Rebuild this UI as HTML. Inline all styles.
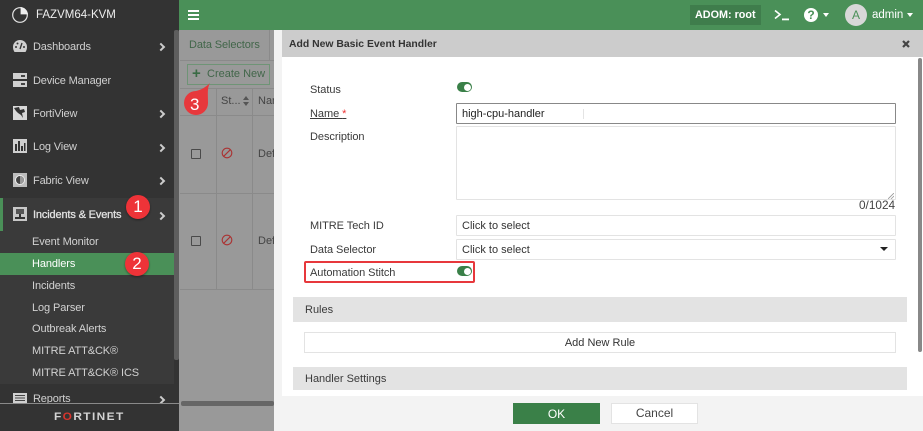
<!DOCTYPE html>
<html><head><meta charset="utf-8"><style>
html,body{margin:0;padding:0}
body{width:923px;height:431px;position:relative;overflow:hidden;background:#999;font-family:"Liberation Sans",sans-serif;font-size:11px;color:#333}
.a{position:absolute}
.t{position:absolute;white-space:nowrap;line-height:16px}
.nav{color:#d0d0d0;font-size:11px;letter-spacing:-.15px;left:33px}
.sub{color:#d2d2d2;font-size:11px;letter-spacing:-.1px;left:32px}
.chev{position:absolute;left:158px;margin-top:.5px;width:4px;height:4px;border-top:2px solid #ccc;border-right:2px solid #ccc;transform:rotate(45deg)}
.lab{color:#3a3a3a;left:310px;font-size:11px;letter-spacing:-.05px}
.inp{position:absolute;left:456px;width:438px;background:#fff;border:1px solid #e3e3e3;border-radius:1px}
.sec{position:absolute;left:293px;width:614px;background:#e3e3e3}
.badge{position:absolute;width:24px;height:24px;border-radius:50%;background:#ee3338;color:#fff;font-size:17px;line-height:24px;text-align:center;box-shadow:0 1px 2px rgba(0,0,0,.4)}
</style></head><body>

<!-- sidebar -->
<div class="a" style="left:0;top:0;width:179px;height:431px;background:#333"></div>
<div class="a" style="left:0;top:198px;width:174px;height:186px;background:#3a3a3a"></div>
<div class="a" style="left:0;top:198px;width:3px;height:33px;background:#4a9058"></div>
<div class="a" style="left:174px;top:30px;width:5px;height:330px;background:#5e5e5e;border-radius:2px"></div>

<svg class="a" style="left:11px;top:6px" width="18" height="18" viewBox="0 0 18 18"><circle cx="9" cy="9" r="7.3" fill="none" stroke="#e4e4e4" stroke-width="1.2"/><path d="M9.6 1 A8 8 0 0 1 17 8.4 H9.6Z" fill="#eee"/></svg>
<div class="t" style="left:36px;top:7px;color:#eee;font-size:11.5px">FAZVM64-KVM</div>

<svg class="a" style="left:13px;top:40px" width="14" height="12" viewBox="0 0 14 12"><path d="M7 0A7 7 0 0 0 0 7c0 2 .6 3.600 1.500 5H12.500C13.400 10.600 14 9 14 7A7 7 0 0 0 7 0Z" fill="#d0d0d0"/><path d="M7 9L9 3" stroke="#333" stroke-width="1.300"/><circle cx="3" cy="7" r="1" fill="#333"/><circle cx="4.500" cy="3.500" r="1" fill="#333"/><circle cx="11" cy="7" r="1" fill="#333"/></svg>
<div class="t nav" style="top:39px">Dashboards</div><div class="chev" style="top:43px"></div>

<svg class="a" style="left:13px;top:73px" width="14" height="14" viewBox="0 0 14 14"><rect width="14" height="6" fill="#d0d0d0"/><rect y="8" width="14" height="6" fill="#d0d0d0"/><rect x="8" y="2" width="4" height="2" fill="#444"/><rect x="8" y="10" width="4" height="2" fill="#444"/></svg>
<div class="t nav" style="top:73px">Device Manager</div>

<svg class="a" style="left:13px;top:106px" width="14" height="14" viewBox="0 0 14 14"><rect width="14" height="14" fill="#d8d8d8"/><path d="M1 2L6 1L7 4L11 3L12 6L9 7L10 12L8 9L5 7L3 5Z" fill="#333"/></svg>
<div class="t nav" style="top:106px">FortiView</div><div class="chev" style="top:110px"></div>

<svg class="a" style="left:13px;top:139px" width="14" height="14" viewBox="0 0 14 14"><rect width="14" height="14" fill="#d0d0d0"/><rect x="2" y="5" width="2" height="7" fill="#333"/><rect x="5" y="2" width="2" height="10" fill="#333"/><rect x="8" y="7" width="2" height="5" fill="#333"/><rect x="11" y="4" width="1.500" height="8" fill="#333"/></svg>
<div class="t nav" style="top:139px">Log View</div><div class="chev" style="top:144px"></div>

<svg class="a" style="left:13px;top:173px" width="14" height="14" viewBox="0 0 14 14"><rect width="14" height="14" fill="#bdbdbd"/><circle cx="7" cy="7" r="4.500" fill="#444" stroke="#eee" stroke-width="1"/><path d="M7 3A4 4 0 0 1 7 11Z" fill="#999"/></svg>
<div class="t nav" style="top:173px">Fabric View</div><div class="chev" style="top:177px"></div>

<svg class="a" style="left:13px;top:207px" width="14" height="14" viewBox="0 0 14 14"><rect width="14" height="14" fill="#c8c8c8"/><rect x="3" y="2" width="8" height="5" fill="#555"/><rect x="6" y="7" width="2" height="3" fill="#333"/><rect x="2" y="10" width="10" height="2" fill="#333"/></svg>
<div class="t nav" style="top:207px;color:#e2e2e2;-webkit-text-stroke:.3px #e2e2e2">Incidents &amp; Events</div><div class="chev" style="top:212px"></div>

<div class="t sub" style="top:234px">Event Monitor</div>
<div class="a" style="left:0;top:253px;width:174px;height:22px;background:#4a9058"></div>
<div class="t sub" style="top:256px;color:#fff">Handlers</div>
<div class="t sub" style="top:278px">Incidents</div>
<div class="t sub" style="top:300px">Log Parser</div>
<div class="t sub" style="top:321px">Outbreak Alerts</div>
<div class="t sub" style="top:343px">MITRE ATT&amp;CK®</div>
<div class="t sub" style="top:365px">MITRE ATT&amp;CK® ICS</div>

<svg class="a" style="left:13px;top:393px" width="14" height="10" viewBox="0 0 14 10"><rect width="14" height="10" fill="#d0d0d0"/><path d="M2 2.500H12M2 5H12M2 7.500H12" stroke="#444"/></svg>
<div class="t nav" style="top:391px">Reports</div><div class="chev" style="top:396px"></div>

<div class="a" style="left:0;top:403px;width:179px;height:28px;background:#333;border-top:1px solid #8a8a8a;box-sizing:border-box"></div>
<div class="t" style="left:54px;top:409px;color:#d4d4d4;font-size:11px;font-weight:bold;letter-spacing:1.300px;transform:scaleX(1.080);transform-origin:left">F<span style="color:#d8342c">O</span>RTINET</div>

<!-- topbar -->
<div class="a" style="left:179px;top:0;width:744px;height:30px;background:#4a9058"></div>
<div class="a" style="left:188px;top:10px;width:11px;height:2px;background:#fff;box-shadow:0 4px 0 #fff,0 8px 0 #fff"></div>
<div class="a" style="left:690px;top:5px;width:71px;height:20px;background:#3f7d4c"></div>
<div class="t" style="left:695px;top:7px;color:#fff;font-weight:bold;font-size:10.8px">ADOM: root</div>
<svg class="a" style="left:774px;top:9px" width="16" height="13" viewBox="0 0 16 13"><path d="M1 1.500L6 5.500L1 9.500" fill="none" stroke="#fff" stroke-width="1.600"/><rect x="8" y="9.500" width="7" height="1.800" fill="#fff"/></svg>
<div class="a" style="left:804px;top:8px;width:14px;height:14px;border-radius:50%;background:#fff;color:#4a9058;font-weight:bold;font-size:12px;line-height:14px;text-align:center">?</div>
<div class="a" style="left:823px;top:13px;border:3.500px solid transparent;border-top:4px solid #fff;border-bottom:0"></div>
<div class="a" style="left:845px;top:4px;width:22px;height:22px;border-radius:50%;background:#d8d8d8;color:#4a9058;font-size:12px;line-height:22px;text-align:center">A</div>
<div class="t" style="left:872px;top:7px;color:#fff;font-size:11.500px">admin</div>
<div class="a" style="left:907px;top:13px;border:3.500px solid transparent;border-top:4px solid #fff;border-bottom:0"></div>

<!-- dimmed background content -->
<div class="a" style="left:179px;top:30px;width:95px;height:371px;background:#999"></div>
<div class="a" style="left:180px;top:60px;width:94px;height:1px;background:#8a8a8a"></div>
<div class="a" style="left:269px;top:30px;width:1px;height:30px;background:#8a8a8a"></div>
<div class="t" style="left:189px;top:37px;color:#42664a;font-size:11px;letter-spacing:-.1px">Data Selectors</div>
<div class="a" style="left:187px;top:64px;width:81px;height:19px;border:1px solid #6f9476"></div>
<div class="t" style="left:192px;top:66px;color:#3a6b45;font-size:15px;font-weight:bold">+</div>
<div class="t" style="left:207px;top:66px;color:#42664a;font-size:11px">Create New</div>
<div class="a" style="left:180px;top:88px;width:94px;height:1px;background:#8a8a8a"></div>
<div class="a" style="left:180px;top:115px;width:94px;height:1px;background:#8a8a8a"></div>
<div class="a" style="left:180px;top:193px;width:94px;height:1px;background:#8a8a8a"></div>
<div class="a" style="left:180px;top:289px;width:94px;height:1px;background:#8a8a8a"></div>
<div class="a" style="left:216px;top:88px;width:1px;height:201px;background:#8a8a8a"></div>
<div class="a" style="left:252px;top:88px;width:1px;height:201px;background:#8a8a8a"></div>
<div class="t" style="left:221px;top:93px;color:#444;font-size:11px">St...</div>
<div class="a" style="left:243px;top:96px;border:3px solid transparent;border-bottom:4px solid #555;border-top:0"></div>
<div class="a" style="left:243px;top:102px;border:3px solid transparent;border-top:4px solid #555;border-bottom:0"></div>
<div class="t" style="left:258px;top:93px;color:#444;font-size:11px">Nar</div>
<div class="a" style="left:191px;top:149px;width:8px;height:8px;border:1.500px solid #4a4a4a;border-radius:1px"></div>
<div class="a" style="left:191px;top:236px;width:8px;height:8px;border:1.500px solid #4a4a4a;border-radius:1px"></div>
<svg class="a" style="left:221px;top:147px" width="12" height="12" viewBox="0 0 12 12"><circle cx="6" cy="6" r="4.800" fill="none" stroke="#a33" stroke-width="1.100"/><path d="M2.800 9.200L9.200 2.800" stroke="#a33" stroke-width="1.100"/></svg>
<svg class="a" style="left:221px;top:234px" width="12" height="12" viewBox="0 0 12 12"><circle cx="6" cy="6" r="4.800" fill="none" stroke="#a33" stroke-width="1.100"/><path d="M2.800 9.200L9.200 2.800" stroke="#a33" stroke-width="1.100"/></svg>
<div class="t" style="left:258px;top:146px;color:#444;font-size:11px">Def</div>
<div class="t" style="left:258px;top:233px;color:#444;font-size:11px">Def</div>
<div class="a" style="left:181px;top:401px;width:93px;height:5px;background:#666;border-radius:2px"></div>
<div class="a" style="left:181px;top:406px;width:93px;height:25px;background:#999"></div>

<!-- panel -->
<div class="a" style="left:274px;top:30px;width:649px;height:401px;background:#f3f3f3"></div>
<div class="a" style="left:282px;top:30px;width:641px;height:27px;background:#ccc"></div>
<div class="t" style="left:289px;top:37px;font-weight:bold;font-size:10.4px;color:#333">Add New Basic Event Handler</div>
<svg class="a" style="left:902px;top:40px" width="8" height="8" viewBox="0 0 8 8"><path d="M1 1L7 7M7 1L1 7" stroke="#444" stroke-width="2.200"/></svg>
<div class="a" style="left:282px;top:57px;width:641px;height:339px;background:#fff"></div>
<div class="a" style="left:918px;top:58px;width:4px;height:294px;background:#888;border-radius:2px"></div>

<div class="t lab" style="top:82px">Status</div>
<div class="a" style="left:457px;top:82px;width:15px;height:10px;background:#3a8048;border-radius:5px"></div>
<div class="a" style="left:464px;top:83.500px;width:7px;height:7px;background:#fff;border-radius:50%"></div>

<div class="t lab" style="top:106px;text-decoration:underline">Name <span style="color:#e33">*</span></div>
<div class="a" style="left:456px;top:103px;width:438px;height:19px;background:#fff;border:1px solid #888;border-radius:1px"></div>
<div class="t" style="left:462px;top:106px;color:#222;font-size:11px">high-cpu-handler</div>
<div class="a" style="left:583px;top:109px;width:1px;height:10px;background:#e4e4e4"></div>

<div class="t lab" style="top:129px">Description</div>
<div class="inp" style="top:126px;height:72px"></div>
<svg class="a" style="left:888px;top:193px" width="6" height="6" viewBox="0 0 6 6"><path d="M0 6L6 0M3 6L6 3" stroke="#999" stroke-width=".8"/></svg>
<div class="t" style="left:859px;top:197px;color:#444;font-size:11.800px">0/1024</div>

<div class="t lab" style="top:218px">MITRE Tech ID</div>
<div class="inp" style="top:215px;height:19px"></div>
<div class="t" style="left:462px;top:218px;color:#333;font-size:11px">Click to select</div>

<div class="t lab" style="top:242px">Data Selector</div>
<div class="inp" style="top:239px;height:19px"></div>
<div class="t" style="left:462px;top:242px;color:#333;font-size:11px">Click to select</div>
<div class="a" style="left:880px;top:247px;border:4px solid transparent;border-top-color:#222;border-bottom:0"></div>

<div class="a" style="left:304px;top:261px;width:167px;height:18px;border:2px solid #e7383c;border-radius:2px"></div>
<div class="t lab" style="top:265px">Automation Stitch</div>
<div class="a" style="left:457px;top:266px;width:15px;height:10px;background:#3a8048;border-radius:5px"></div>
<div class="a" style="left:464px;top:267.500px;width:7px;height:7px;background:#fff;border-radius:50%"></div>

<div class="sec" style="top:297px;height:25px"></div>
<div class="t" style="left:305px;top:302px;color:#3a3a3a;font-size:11px">Rules</div>
<div class="a" style="left:304px;top:332px;width:590px;height:19px;background:#fff;border:1px solid #e3e3e3"></div>
<div class="t" style="left:304px;width:592px;text-align:center;top:335px;color:#333;font-size:11px">Add New Rule</div>
<div class="sec" style="top:367px;height:23px"></div>
<div class="t" style="left:305px;top:371px;color:#3a3a3a;font-size:11px">Handler Settings</div>

<div class="a" style="left:513px;top:403px;width:87px;height:21px;background:#3a8048"></div>
<div class="t" style="left:513px;width:87px;text-align:center;top:406px;color:#fff;font-size:12px">OK</div>
<div class="a" style="left:611px;top:403px;width:85px;height:19px;background:#fff;border:1px solid #e3e3e3"></div>
<div class="t" style="left:611px;width:87px;text-align:center;top:405px;color:#444;font-size:12px">Cancel</div>

<!-- badges -->
<div class="badge" style="left:126px;top:195px">1</div>
<div class="badge" style="left:125px;top:252px">2</div>
<svg class="a" style="left:183px;top:82px" width="30" height="36" viewBox="0 0 30 36"><path d="M27 1C24 6 25 12 25 21A12 12 0 1 1 13 9C18 8 23 5 27 1Z" fill="#e7383c"/></svg>
<div class="t" style="left:190px;top:95px;color:#fff;font-size:17px;line-height:20px">3</div>

</body></html>
